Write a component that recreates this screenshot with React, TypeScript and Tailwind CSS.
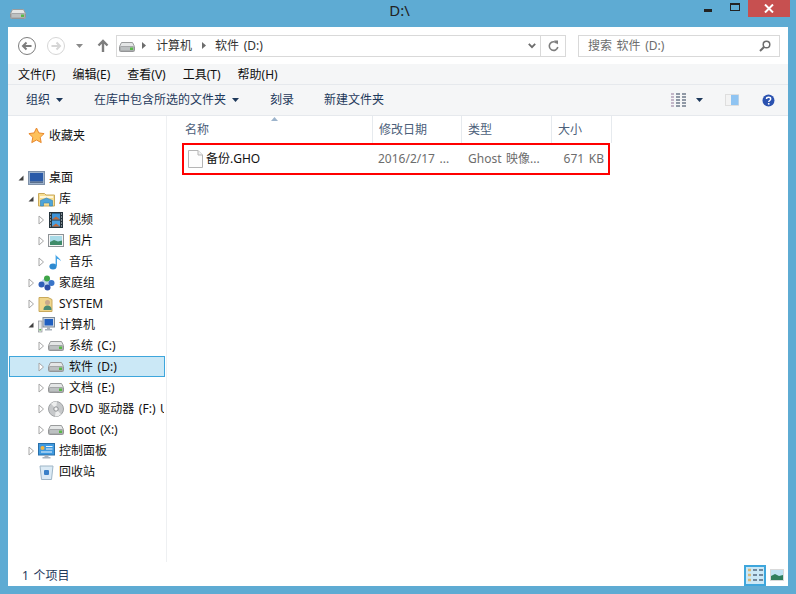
const FONT = "font-['Noto_Sans','Noto_Sans_CJK_SC',sans-serif] [word-spacing:1.5px]";

function Drive({ className = "" }: { className?: string }) {
  return (
    <svg width="16" height="10" viewBox="0 0 16 10" className={className}>
      <path d="M2.500.5h11L15.500 4.500v4a1 1 0 0 1-1 1h-13a1 1 0 0 1-1-1v-4z" fill="#e4e6e6" stroke="#9a9c9d" />
      <rect x="1" y="4.500" width="14" height="4.500" rx="1" fill="#bcc0c1" stroke="#86888a" strokeWidth="0.600" />
      <rect x="11" y="5.500" width="3" height="2.500" fill="#58b947" />
    </svg>
  );
}

function Star() {
  return (
    <svg width="17" height="17" viewBox="0 0 17 17">
      <path d="M8.500 1l2.300 4.900 5.300.7-3.900 3.700 1 5.300-4.700-2.600-4.700 2.600 1-5.300L.9 6.600l5.300-.7z" fill="#fdc15a" stroke="#e8862a" />
    </svg>
  );
}

function Desktop() {
  return (
    <svg width="17" height="14" viewBox="0 0 17 14">
      <rect x="0.500" y="0.500" width="16" height="13" fill="#9fb3cc" stroke="#7e90a8" />
      <rect x="2" y="2" width="13" height="8.500" fill="#2a5aa8" />
      <rect x="2" y="10.500" width="13" height="1.500" fill="#5a6f8c" />
    </svg>
  );
}

function LibraryFolder() {
  return (
    <svg width="17" height="16" viewBox="0 0 17 16">
      <path d="M.5 2.500h6l1.500 1.500h8.500v11H.5z" fill="#f6dd92" stroke="#c9a95c" />
      <rect x="2" y="5" width="13" height="2" fill="#fff6d8" />
      <path d="M2.500 15V9.500L8.500 7l6 2.500V15h-3v-3h-6v3z" fill="#4ea4d8" stroke="#2f7fb5" strokeWidth="0.600" />
    </svg>
  );
}

function Film() {
  return (
    <svg width="14" height="16" viewBox="0 0 14 16">
      <rect width="14" height="16" fill="#26343d" />
      <rect x="3" y="1.500" width="8" height="6" fill="#3d93d8" />
      <rect x="3" y="8.500" width="8" height="6" fill="#4aa0e0" />
      <path d="M3 7.500l4-3 4 3zM3 14.500l4-3 4 3z" fill="#c16a3a" />
      <path d="M1 2h1M1 5h1M1 8h1M1 11h1M1 14h1M12 2h1M12 5h1M12 8h1M12 11h1M12 14h1" stroke="#dfe6ea" />
    </svg>
  );
}

function Picture() {
  return (
    <svg width="16" height="13" viewBox="0 0 16 13">
      <rect x="0.500" y="0.500" width="15" height="12" fill="#f4f4f4" stroke="#8d9296" />
      <rect x="2" y="2" width="12" height="9" fill="#a9dbe8" />
      <path d="M2 8l4-2 4 1.500 4-1V11H2z" fill="#3f8b6a" />
    </svg>
  );
}

function Music() {
  return (
    <svg width="14" height="17" viewBox="0 0 14 17">
      <ellipse cx="4" cy="13.500" rx="3.600" ry="3" fill="#2f8ad0" />
      <path d="M6.600 13V1.200c.5 2.400 4.600 3.600 5.400 7-1.200-1.500-2.900-2.300-4-2.500V13z" fill="#45a4e6" />
    </svg>
  );
}

function HomeGroup() {
  return (
    <svg width="17" height="16" viewBox="0 0 17 16">
      <circle cx="8.500" cy="8" r="5" fill="#bfd4ea" />
      <circle cx="9" cy="3.500" r="3" fill="#3fa548" />
      <circle cx="3.500" cy="9.500" r="3" fill="#2f5fb8" />
      <circle cx="13.500" cy="8" r="3" fill="#3a74c8" />
      <circle cx="9.500" cy="12.500" r="3" fill="#2c4fa8" />
    </svg>
  );
}

function UserFolder() {
  return (
    <svg width="16" height="16" viewBox="0 0 16 16">
      <path d="M1 1.500h9l4 2V15.500H1z" fill="#f0d68c" stroke="#c9a95c" />
      <circle cx="9.500" cy="6.500" r="2.500" fill="#c8a98c" />
      <path d="M5.500 14c0-3.500 2-4.500 4-4.500s4 1 4 4.500z" fill="#4b8a74" />
    </svg>
  );
}

function Computer() {
  return (
    <svg width="17" height="16" viewBox="0 0 17 16">
      <rect x="0.500" y="4" width="3.500" height="11" fill="#e6e8ea" stroke="#8d9296" strokeWidth="0.700" />
      <rect x="1.300" y="12" width="1.800" height="1.500" fill="#58b947" />
      <rect x="5" y="0.500" width="11.500" height="9.500" fill="#cfd8e2" stroke="#7e8b99" />
      <rect x="6.500" y="2" width="8.500" height="6.500" fill="#1f5fc0" />
      <path d="M9 10h3v2h2v1.500H7V12h2z" fill="#a9b2bc" />
    </svg>
  );
}

function Dvd() {
  return (
    <svg width="16" height="16" viewBox="0 0 16 16">
      <circle cx="8" cy="8" r="7.500" fill="#c6c8ca" stroke="#9ea1a3" />
      <path d="M8 8L3 2.800A7.500 7.500 0 0 1 9 .6zM8 8l5 5.200A7.500 7.500 0 0 1 7 15.400z" fill="#eceded" />
      <circle cx="8" cy="8" r="2.200" fill="#f4f4f4" stroke="#8d9093" />
    </svg>
  );
}

function ControlPanel() {
  return (
    <svg width="17" height="16" viewBox="0 0 17 16">
      <rect x="0.500" y="0.500" width="16" height="11.500" fill="#3f9ae0" stroke="#2a6fa8" />
      <circle cx="4.500" cy="5" r="2" fill="#f5b53d" />
      <path d="M8 3.500h6.500M8 6h6.500M3 9h11" stroke="#eef6fc" strokeWidth="1.200" />
      <path d="M6.500 12h4v2h2v1.500h-8V14h2z" fill="#a9b2bc" />
    </svg>
  );
}

function Recycle() {
  return (
    <svg width="15" height="16" viewBox="0 0 15 16">
      <path d="M1 2h13l-1.500 13.500h-10z" fill="#dbeaf5" stroke="#9eb5c6" />
      <rect x="5" y="6" width="5" height="5" rx="1" fill="#3a80c8" />
    </svg>
  );
}

function FileDoc() {
  return (
    <svg width="15" height="18" viewBox="0 0 15 18">
      <path d="M.5.500h9.500l4.500 4.500v12.500H.5z" fill="#fdfdfd" stroke="#b5b5b5" />
      <path d="M10 .500V5h4.500" fill="#f0f0f0" stroke="#b5b5b5" />
    </svg>
  );
}

function ArrowOpen() {
  return (
    <svg width="10" height="10" viewBox="0 0 10 10">
      <path d="M7.500 2.500v5h-5z" fill="#404040" />
    </svg>
  );
}

function ArrowClosed() {
  return (
    <svg width="10" height="10" viewBox="0 0 10 10">
      <path d="M3 1l4.500 4L3 9z" fill="#fff" stroke="#a6a6a6" />
    </svg>
  );
}

function Caret({ className = "fill-[#1e395b]" }: { className?: string }) {
  return (
    <svg width="7" height="4" viewBox="0 0 7 4" className={className}>
      <path d="M0 0h7L3.500 4z" />
    </svg>
  );
}

function BreadcrumbArrow({ className = "" }: { className?: string }) {
  return (
    <svg width="4" height="7" viewBox="0 0 4 7" className={className}>
      <path d="M0 0l4 3.500L0 7z" fill="#6d6d6d" />
    </svg>
  );
}

type TreeRow = {
  label: string;
  icon: React.ReactNode;
  level: 0 | 1 | 2;
  arrow?: "open" | "closed";
  selected?: boolean;
  gap?: boolean;
};

const rows: TreeRow[] = [
  { label: "收藏夹", icon: <Star />, level: 0, gap: true },
  { label: "桌面", icon: <Desktop />, level: 0, arrow: "open" },
  { label: "库", icon: <LibraryFolder />, level: 1, arrow: "open" },
  { label: "视频", icon: <Film />, level: 2, arrow: "closed" },
  { label: "图片", icon: <Picture />, level: 2, arrow: "closed" },
  { label: "音乐", icon: <Music />, level: 2, arrow: "closed" },
  { label: "家庭组", icon: <HomeGroup />, level: 1, arrow: "closed" },
  { label: "SYSTEM", icon: <UserFolder />, level: 1, arrow: "closed" },
  { label: "计算机", icon: <Computer />, level: 1, arrow: "open" },
  { label: "系统 (C:)", icon: <Drive />, level: 2, arrow: "closed" },
  { label: "软件 (D:)", icon: <Drive />, level: 2, arrow: "closed", selected: true },
  { label: "文档 (E:)", icon: <Drive />, level: 2, arrow: "closed" },
  { label: "DVD 驱动器 (F:) U", icon: <Dvd />, level: 2, arrow: "closed" },
  { label: "Boot (X:)", icon: <Drive />, level: 2, arrow: "closed" },
  { label: "控制面板", icon: <ControlPanel />, level: 1, arrow: "closed" },
  { label: "回收站", icon: <Recycle />, level: 1 },
];

const indent = { 0: "pl-[6px]", 1: "pl-[16px]", 2: "pl-[26px]" };

function Row({ row }: { row: TreeRow }) {
  return (
    <div
      className={`flex h-[21px] w-[156px] items-center overflow-hidden whitespace-nowrap border ${indent[row.level]} ${
        row.selected ? "border-[#3ea6dc] bg-[#cbe8f6]" : "border-transparent"
      } ${row.gap ? "mb-[21px]" : ""}`}
    >
      <span className="flex w-[10px] shrink-0 justify-center">
        {row.arrow === "open" && <ArrowOpen />}
        {row.arrow === "closed" && <ArrowClosed />}
      </span>
      <span className="ml-[1px] flex w-[18px] shrink-0 items-center justify-center">{row.icon}</span>
      <span className="ml-[4px] text-[12px] text-[#111]">{row.label}</span>
    </div>
  );
}

const columns = [
  { label: "名称", w: "w-[191px]", pl: "pl-[3px]" },
  { label: "修改日期", w: "w-[89px]", pl: "pl-[6px]" },
  { label: "类型", w: "w-[90px]", pl: "pl-[6px]" },
  { label: "大小", w: "w-[60px]", pl: "pl-[6px]" },
];

export default function App() {
  return (
    <div className={`flex h-[594px] w-[796px] flex-col overflow-hidden bg-[#5eabd3] px-2 pb-2 ${FONT}`}>
      {/* title bar */}
      <div className="relative flex h-[27px] shrink-0 items-center justify-center text-[15px] text-[#222]">
        <Drive className="absolute left-[2px] top-[9px]" />
        <span className="-mt-[7px] ml-[3px]">D:\</span>
        <div className="absolute -right-[2px] top-0 flex items-start">
          <span className="mr-[18px] mt-[9px] h-[3px] w-[8px] bg-[#222]" />
          <span className="mr-[8px] mt-[3px] h-[8px] w-[10px] border border-t-2 border-[#222]" />
          <span className="flex h-[17px] w-[42px] items-center justify-center bg-[#c75050]">
            <svg width="10" height="9" viewBox="0 0 10 9">
              <path d="M1 .5l8 8M9 .5l-8 8" stroke="#fff" strokeWidth="2" />
            </svg>
          </span>
        </div>
      </div>

      <div className="flex min-h-0 flex-1 flex-col bg-white">
        {/* address row */}
        <div className="flex h-[37px] shrink-0 items-center pl-[10px]">
          <svg width="18" height="18" viewBox="0 0 18 18">
            <circle cx="9" cy="9" r="8.500" fill="#fff" stroke="#7d7d7d" />
            <path d="M13.500 9h-8M8.500 5.500L5 9l3.500 3.500" fill="none" stroke="#7d7d7d" strokeWidth="2" />
          </svg>
          <svg width="18" height="18" viewBox="0 0 18 18" className="ml-[11px]">
            <circle cx="9" cy="9" r="8.500" fill="#fff" stroke="#d6d6d6" />
            <path d="M4.500 9h8M9.500 5.500L13 9l-3.500 3.500" fill="none" stroke="#d6d6d6" strokeWidth="2" />
          </svg>
          <Caret className="ml-[11px] fill-[#8a8a8a]" />
          <svg width="12" height="14" viewBox="0 0 12 14" className="ml-[14px]">
            <path d="M6 13V2M1.500 6.500L6 2l4.500 4.500" fill="none" stroke="#7d7d7d" strokeWidth="2.400" />
          </svg>
          <div className="ml-[7px] flex h-[22px] w-[450px] items-center border border-[#d9d9d9] text-[12px] text-[#333]">
            <Drive className="ml-[2px] mt-[3px]" />
            <BreadcrumbArrow className="ml-[7px]" />
            <span className="ml-[10px]">计算机</span>
            <BreadcrumbArrow className="ml-[10px]" />
            <span className="ml-[9px]">软件 (D:)</span>
            <svg width="8" height="6" viewBox="0 0 8 6" className="ml-auto mr-[4px]">
              <path d="M.8.8L4 4.200 7.200.8" fill="none" stroke="#6d6d6d" strokeWidth="1.800" />
            </svg>
            <span className="flex h-full w-[25px] items-center justify-center border-l border-[#d9d9d9]">
              <svg width="11" height="12" viewBox="0 0 11 12">
                <path d="M8.800 3.200A4.300 4.300 0 1 0 9.800 7" fill="none" stroke="#7d7d7d" strokeWidth="1.600" />
                <path d="M6 .5h4v4z" fill="#7d7d7d" />
              </svg>
            </span>
          </div>
          <div className="ml-[12px] flex h-[22px] w-[202px] items-center border border-[#d9d9d9] pl-[9px] pr-[8px] text-[12px] text-[#6d6d6d]">
            <span>搜索 软件 (D:)</span>
            <svg width="12" height="12" viewBox="0 0 12 12" className="ml-auto">
              <circle cx="7.500" cy="4.500" r="3.300" fill="none" stroke="#6d6d6d" strokeWidth="1.500" />
              <path d="M5 7l-4 4" stroke="#6d6d6d" strokeWidth="2" />
            </svg>
          </div>
        </div>

        {/* menu */}
        <div className="flex h-[20px] shrink-0 items-center gap-[17px] bg-[#f5f6f7] pl-[10px] pt-[1px] text-[12px] text-[#111]">
          <span>文件(F)</span>
          <span>编辑(E)</span>
          <span>查看(V)</span>
          <span>工具(T)</span>
          <span>帮助(H)</span>
        </div>

        {/* toolbar */}
        <div className="flex h-[32px] shrink-0 items-center border-y border-[#e6e9ed] bg-[#f5f6f7] pl-[18px] text-[12px] text-[#1e395b]">
          <span>组织</span>
          <Caret className="ml-[6px] fill-[#1e395b]" />
          <span className="ml-[31px]">在库中包含所选的文件夹</span>
          <Caret className="ml-[6px] fill-[#1e395b]" />
          <span className="ml-[31px]">刻录</span>
          <span className="ml-[30px]">新建文件夹</span>
          <svg width="16" height="14" viewBox="0 0 16 14" className="ml-auto">
            <path d="M0 1h3M0 4h3M0 7h3M0 10h3M0 13h3" stroke="#c4b6c8" strokeWidth="2" />
            <path d="M5 1h4M11 1h4M5 4h4M11 4h4M5 7h4M11 7h4M5 10h4M11 10h4M5 13h4M11 13h4" stroke="#6f7b8c" strokeWidth="1.300" />
          </svg>
          <Caret className="ml-[9px] fill-[#1e395b]" />
          <svg width="14" height="12" viewBox="0 0 14 12" className="ml-[22px]">
            <rect x="0.500" y="0.500" width="13" height="11" fill="#f3f3f3" stroke="#dedede" />
            <rect x="6" y="1" width="7.500" height="10" fill="#8fc4f2" />
          </svg>
          <svg width="13" height="13" viewBox="0 0 13 13" className="ml-[23px] mr-[13px]">
            <circle cx="6.500" cy="6.500" r="6" fill="#2b52b0" />
            <path d="M4.500 5c0-2.300 4.200-2.300 4.200 0 0 1.500-2 1.400-2 3" fill="none" stroke="#fff" strokeWidth="1.400" />
            <rect x="5.900" y="9" width="1.600" height="1.600" fill="#fff" />
          </svg>
        </div>

        {/* body */}
        <div className="flex min-h-0 flex-1">
          <div className="flex w-[159px] shrink-0 flex-col border-r border-[#eef0f2] pl-[1px] pt-[9px]">
            {rows.map((row) => (
              <Row key={row.label} row={row} />
            ))}
          </div>
          <div className="flex min-w-0 flex-1 flex-col pl-[15px]">
            <div className="relative flex h-[27px] shrink-0 text-[12px] text-[#4c607a]">
              {columns.map((c) => (
                <div key={c.label} className={`flex items-center border-r border-[#e6eaee] ${c.w} ${c.pl}`}>
                  {c.label}
                </div>
              ))}
              <svg width="7" height="4" viewBox="0 0 7 4" className="absolute left-[89px] top-[1px]">
                <path d="M3.500 0L7 4H0z" fill="#9db4cc" />
              </svg>
            </div>
            <div className="flex h-[32px] w-[428px] items-center border-2 border-[#ff0000] text-[12px]">
              <div className="flex w-[188px] items-center pl-[4px] text-[#111]">
                <FileDoc />
                <span className="ml-[3px]">备份.GHO</span>
              </div>
              <div className="w-[90px] whitespace-nowrap pl-[6px] text-[#6d6d6d]">2016/2/17 ...</div>
              <div className="w-[90px] whitespace-nowrap pl-[6px] text-[#6d6d6d]">Ghost 映像...</div>
              <div className="flex-1 pr-[4px] text-right text-[#6d6d6d]">671 KB</div>
            </div>
          </div>
        </div>

        {/* status bar */}
        <div className="flex h-[24px] shrink-0 items-center pl-[14px] text-[12px] text-[#1e395b]">
          <span className="mt-[4px]">1 个项目</span>
          <div className="ml-auto mt-[2px] flex items-center pr-[4px]">
            <span className="flex h-[21px] w-[22px] items-center justify-center border-2 border-[#3ea6dc] bg-[#cbe8f6]">
              <svg width="16" height="14" viewBox="0 0 16 14">
                <path d="M1 2h3M1 7h3M1 12h3" stroke="#d8b878" strokeWidth="2.400" />
                <path d="M6 2h4M12 2h4M6 7h4M12 7h4M6 12h4M12 12h4" stroke="#556a80" strokeWidth="1.500" />
              </svg>
            </span>
            <svg width="14" height="12" viewBox="0 0 14 12" className="ml-[4px]">
              <rect width="14" height="12" fill="#d9d9d9" />
              <rect x="1" y="1" width="12" height="10" fill="#bfe3f2" />
              <path d="M1 7l4-2 4 2 4-1v5H1z" fill="#2f7f5c" />
            </svg>
          </div>
        </div>
      </div>
    </div>
  );
}
